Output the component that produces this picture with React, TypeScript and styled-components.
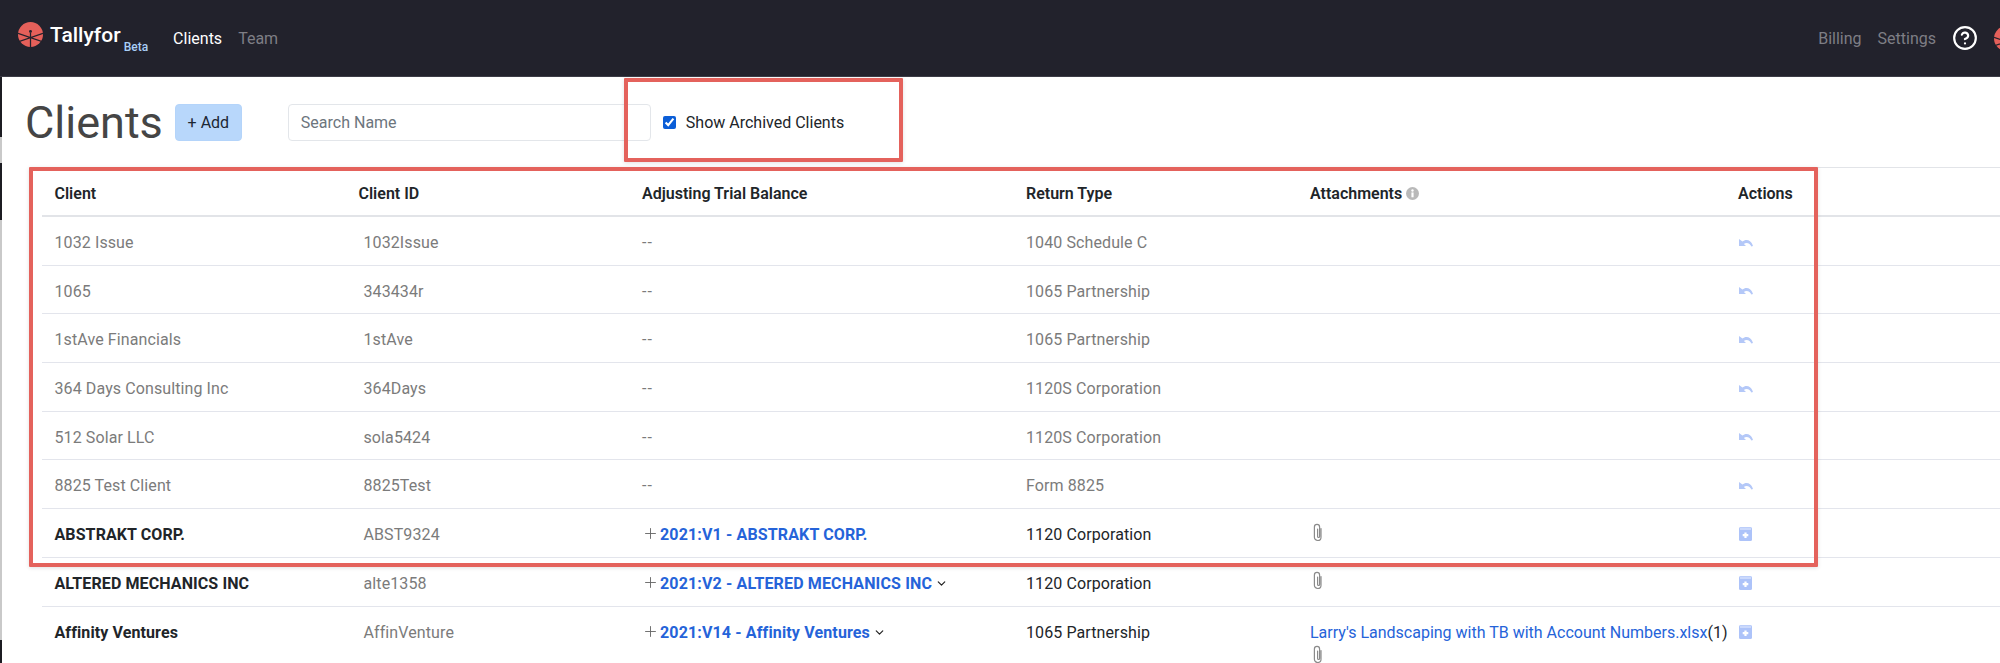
import styled, { createGlobalStyle } from "styled-components";
import { ChevronDown, CircleHelp, Plus } from "lucide-react";

const GlobalStyle = createGlobalStyle`
  html, body {
    margin: 0;
    padding: 0;
    background: #fff;
    overflow: hidden;
  }
  body {
    font-family: Roboto, "Liberation Sans", sans-serif;
    font-size: 16px;
    color: #212529;
  }
`;

const Page = styled.div`
  position: relative;
  display: flex;
  flex-direction: column;
  width: 2000px;
  height: 663px;
  overflow: hidden;
`;

const TopBar = styled.header`
  display: flex;
  align-items: center;
  flex: none;
  box-sizing: border-box;
  height: 77px;
  padding: 0 0 0 18px;
  background: #22222c;
  border-bottom: 1px solid #3c3c46;
`;

const Brand = styled.div`
  display: flex;
  align-items: flex-start;
  margin-top: -6px;
  margin-right: 25px;
`;

const BrandName = styled.span`
  margin-left: 7px;
  font-size: 21px;
  font-weight: 500;
  line-height: 26px;
  color: #fff;
`;

const BrandTag = styled.span`
  align-self: flex-end;
  margin: 0 0 -6px 3px;
  font-size: 12px;
  font-weight: 500;
  line-height: 14px;
  color: #a9cff7;
`;

const NavLink = styled.a<{ $active?: boolean }>`
  margin-right: 16px;
  font-size: 16px;
  color: ${(p) => (p.$active ? "#fff" : "#7e7e85")};
`;

const NavRight = styled.nav`
  display: flex;
  align-items: center;
  margin-left: auto;
  margin-right: -19px;
`;

const HelpButton = styled.span`
  display: flex;
  margin: 0 16px 0 0;
  color: #fff;
`;

const Body = styled.div`
  display: flex;
  flex: 1;
  min-height: 0;
`;

const EdgeStrip = styled.div`
  display: flex;
  flex-direction: column;
  flex: none;
  width: 2px;
`;

const EdgeSegment = styled.div<{ $h: number; $dark?: boolean }>`
  flex: none;
  height: ${(p) => p.$h}px;
  background: ${(p) => (p.$dark ? "#1c1c22" : "#c9c9c9")};
`;

const Main = styled.main`
  flex: 1;
  min-width: 0;
`;

const Toolbar = styled.div`
  display: flex;
  align-items: center;
  box-sizing: border-box;
  height: 90px;
  padding: 0 0 0 23px;
`;

const Title = styled.h1`
  margin: 1px 12px 0 0;
  font-size: 45px;
  font-weight: 400;
  line-height: 52px;
  color: #454545;
`;

const AddButton = styled.button`
  width: 67px;
  height: 37px;
  padding: 0;
  font: inherit;
  color: #1c2733;
  background: #b8d7fb;
  border: 1px solid #b4d4fa;
  border-radius: 4px;
`;

const SearchInput = styled.input`
  box-sizing: border-box;
  width: 363px;
  height: 37px;
  margin-left: 46px;
  padding: 0 12px;
  font: inherit;
  color: #212529;
  background: #fff;
  border: 1px solid #e3e6ea;
  border-radius: 4px;
  outline: none;

  &::placeholder {
    color: #6c757d;
    opacity: 1;
  }
`;

const ArchivedLabel = styled.label`
  display: flex;
  align-items: center;
  margin-left: 12px;
  color: #212529;
`;

const Checkbox = styled.input`
  width: 13px;
  height: 13px;
  margin: 0 10px 0 0;
  accent-color: #0b5ed7;
`;

const Table = styled.div`
  margin-left: 40px;
  border-top: 1px solid #e2e4e8;
`;

const columns = "304px 283.5px 384px 284px 428px 274.5px";

const HeadRow = styled.div`
  display: grid;
  grid-template-columns: ${columns};
  box-sizing: border-box;
  height: 49px;
  align-items: center;
  padding-top: 4px;
  border-bottom: 2px solid #e2e4e8;
`;

const HeadCell = styled.div`
  padding: 0 12.5px;
  font-weight: 600;
  line-height: 24px;
  color: #212529;
`;

const Row = styled.div`
  display: grid;
  grid-template-columns: ${columns};
  box-sizing: border-box;
  height: 48.7px;
  border-bottom: 1px solid #e3e5ec;

  &:last-child {
    border-bottom: none;
  }
`;

const Cell = styled.div<{ $muted?: boolean }>`
  padding: 14px 12.5px 0;
  line-height: 24px;
  letter-spacing: 0.1px;
  white-space: nowrap;
  color: ${(p) => (p.$muted ? "#7b7b7b" : "#212529")};
`;

const ClientCell = styled(Cell)<{ $strong?: boolean }>`
  font-weight: ${(p) => (p.$strong ? 700 : 400)};
`;

const IdCell = styled(Cell)`
  padding-left: 17.5px;
  color: #7b7b7b;
`;

const Dashes = styled.span`
  letter-spacing: 1px;
`;

const BalanceLine = styled.div`
  display: flex;
  align-items: center;
  color: #666;

  & > svg:first-child {
    margin-top: -3px;
  }
`;

const BalanceLink = styled.a`
  margin: 0 3px 0 1px;
  font-weight: 700;
  letter-spacing: 0.14px;
  color: #2563d9;
`;

const FileLine = styled.div`
  display: block;
  letter-spacing: 0;
`;

const FileLink = styled.a`
  color: #2563d9;
`;

const ClipLine = styled.div<{ $stacked?: boolean }>`
  display: flex;
  height: 24px;
  align-items: center;
  padding-left: 2px;
  margin-top: ${(p) => (p.$stacked ? "-2px" : "-3px")};
`;

const ActionLine = styled.div<{ $raised?: boolean }>`
  display: flex;
  align-items: center;
  height: 24px;
  padding-left: 1px;
  margin-top: ${(p) => (p.$raised ? "-1px" : "0")};
`;

const HeadInfo = styled.span`
  display: inline-flex;
  margin-left: 4px;
  vertical-align: -1.5px;
`;

const Annotation = styled.div<{ $l: number; $t: number; $w: number; $h: number }>`
  position: absolute;
  left: ${(p) => p.$l}px;
  top: ${(p) => p.$t}px;
  box-sizing: border-box;
  width: ${(p) => p.$w}px;
  height: ${(p) => p.$h}px;
  border: 4px solid #e4625c;
  border-radius: 1px;
  box-shadow: 0 1px 4px rgba(0, 0, 0, 0.12);
  pointer-events: none;
`;

function Logo() {
  return (
    <svg width="25" height="25" viewBox="0 0 24 24">
      <circle cx="12" cy="12" r="12" fill="#e5605a" />
      <circle cx="12" cy="9" r="1.4" fill="#22222c" />
      <path
        d="M12 10v14M0 11l24 8M24 11L0 19"
        stroke="#22222c"
        strokeWidth="1.2"
        fill="none"
      />
    </svg>
  );
}

function UndoIcon() {
  return (
    <svg width="14" height="9" viewBox="0 0 14 9">
      <path
        d="M3.4 2.6C4.6 1.6 6 1 7.5 1c2.6 0 4.8 1.7 5.7 4l.8 2-1.6.5C11.600 5.700 9.800 4 7.500 4c-1 0-1.900.3-2.600.9L7 7H0V0z"
        fill="#b4c8f8"
      />
    </svg>
  );
}

function RestoreIcon() {
  return (
    <svg width="13" height="14" viewBox="0 0 13 14">
      <rect width="13" height="14" rx="1.500" fill="#adc3f9" />
      <rect x="1" y="0.500" width="11" height="2.500" fill="#cbd9fc" />
      <path d="M6.500 5.500v5.500M3.700 8.200h5.600" stroke="#fff" strokeWidth="2.200" />
    </svg>
  );
}

function ClipIcon() {
  return (
    <svg width="12" height="19" viewBox="0 0 12 19">
      <path
        d="M9 5.500v8.700a3.300 3.300 0 0 1-6.600 0V4a2.600 2.600 0 0 1 5.200 0v9.500a1 1 0 0 1-2 0V6"
        fill="none"
        stroke="#8a8a8a"
        strokeWidth="1.200"
        strokeLinecap="round"
      />
    </svg>
  );
}

function InfoIcon() {
  return (
    <svg width="13" height="13" viewBox="0 0 12 12">
      <circle cx="6" cy="6" r="6" fill="#b9b9b9" />
      <rect x="5" y="5" width="2" height="4.500" fill="#fff" />
      <circle cx="6" cy="3.200" r="1.100" fill="#fff" />
    </svg>
  );
}

type Client = {
  name: string;
  id: string;
  returnType: string;
  balance?: string;
  menu?: boolean;
  clip?: boolean;
  file?: string;
};

const clients: Client[] = [
  { name: "1032 Issue", id: "1032Issue", returnType: "1040 Schedule C" },
  { name: "1065", id: "343434r", returnType: "1065 Partnership" },
  { name: "1stAve Financials", id: "1stAve", returnType: "1065 Partnership" },
  { name: "364 Days Consulting Inc", id: "364Days", returnType: "1120S Corporation" },
  { name: "512 Solar LLC", id: "sola5424", returnType: "1120S Corporation" },
  { name: "8825 Test Client", id: "8825Test", returnType: "Form 8825" },
  {
    name: "ABSTRAKT CORP.",
    id: "ABST9324",
    returnType: "1120 Corporation",
    balance: "2021:V1 - ABSTRAKT CORP.",
    clip: true,
  },
  {
    name: "ALTERED MECHANICS INC",
    id: "alte1358",
    returnType: "1120 Corporation",
    balance: "2021:V2 - ALTERED MECHANICS INC",
    menu: true,
    clip: true,
  },
  {
    name: "Affinity Ventures",
    id: "AffinVenture",
    returnType: "1065 Partnership",
    balance: "2021:V14 - Affinity Ventures",
    menu: true,
    clip: true,
    file: "Larry's Landscaping with TB with Account Numbers.xlsx",
  },
];

function App() {
  return (
    <Page>
      <GlobalStyle />
      <TopBar>
        <Brand>
          <Logo />
          <BrandName>Tallyfor</BrandName>
          <BrandTag>Beta</BrandTag>
        </Brand>
        <NavLink $active>Clients</NavLink>
        <NavLink>Team</NavLink>
        <NavRight>
          <NavLink>Billing</NavLink>
          <NavLink>Settings</NavLink>
          <HelpButton>
            <CircleHelp size={26} strokeWidth={2} />
          </HelpButton>
          <Logo />
        </NavRight>
      </TopBar>
      <Body>
        <EdgeStrip>
          <EdgeSegment $h={60} $dark />
          <EdgeSegment $h={26} />
          <EdgeSegment $h={57} $dark />
          <EdgeSegment $h={420} />
          <EdgeSegment $h={23} $dark />
        </EdgeStrip>
        <Main>
          <Toolbar>
            <Title>Clients</Title>
            <AddButton>+ Add</AddButton>
            <SearchInput placeholder="Search Name" />
            <ArchivedLabel>
              <Checkbox type="checkbox" defaultChecked />
              Show Archived Clients
            </ArchivedLabel>
          </Toolbar>
          <Table>
            <HeadRow>
              <HeadCell>Client</HeadCell>
              <HeadCell>Client ID</HeadCell>
              <HeadCell>Adjusting Trial Balance</HeadCell>
              <HeadCell>Return Type</HeadCell>
              <HeadCell>
                Attachments
                <HeadInfo>
                  <InfoIcon />
                </HeadInfo>
              </HeadCell>
              <HeadCell>Actions</HeadCell>
            </HeadRow>
            {clients.map((c) => {
              const archived = !c.balance;
              return (
                <Row key={c.id}>
                  <ClientCell $muted={archived} $strong={!archived}>
                    {c.name}
                  </ClientCell>
                  <IdCell>{c.id}</IdCell>
                  <Cell $muted={archived}>
                    {c.balance ? (
                      <BalanceLine>
                        <Plus size={17} strokeWidth={1.3} />
                        <BalanceLink>{c.balance}</BalanceLink>
                        {c.menu && <ChevronDown size={13} color="#222" strokeWidth={2.2} />}
                      </BalanceLine>
                    ) : (
                      <Dashes>--</Dashes>
                    )}
                  </Cell>
                  <Cell $muted={archived}>{c.returnType}</Cell>
                  <Cell>
                    {c.file && (
                      <FileLine>
                        <FileLink>{c.file}</FileLink>(1)
                      </FileLine>
                    )}
                    {c.clip && (
                      <ClipLine $stacked={!!c.file}>
                        <ClipIcon />
                      </ClipLine>
                    )}
                  </Cell>
                  <Cell>
                    <ActionLine $raised={!archived}>
                      {archived ? <UndoIcon /> : <RestoreIcon />}
                    </ActionLine>
                  </Cell>
                </Row>
              );
            })}
          </Table>
        </Main>
      </Body>
      <Annotation $l={624} $t={78} $w={279} $h={84} />
      <Annotation $l={29} $t={167} $w={1789} $h={400} />
    </Page>
  );
}

export default App;
